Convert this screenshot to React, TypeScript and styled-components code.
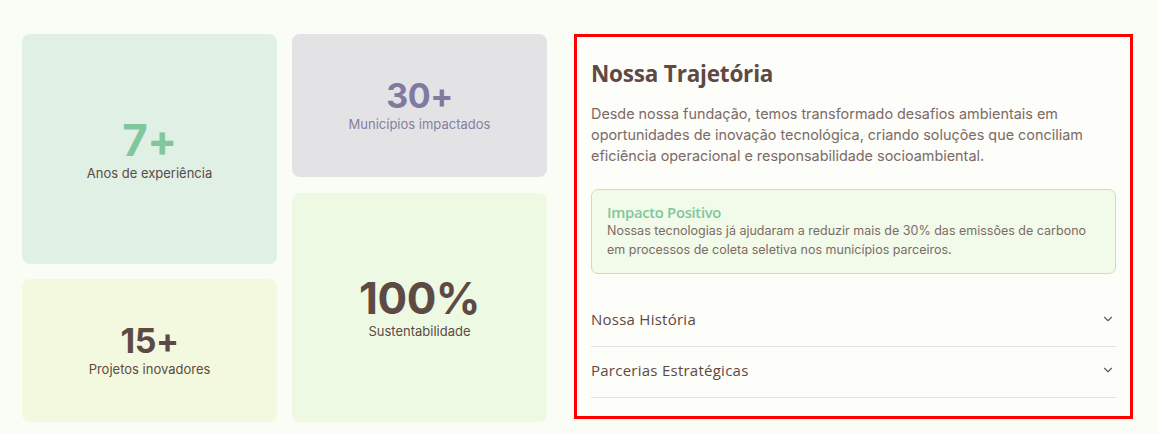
import React from "react";
import styled, { createGlobalStyle } from "styled-components";
import { ChevronDown } from "lucide-react";

const Global = createGlobalStyle`
  html, body { margin: 0; padding: 0; background: #fafcf6; }
  body { font-family: Inter, "Liberation Sans", sans-serif; }
  * { box-sizing: border-box; }
`;

const Page = styled.div`
  display: flex;
  align-items: flex-start;
  gap: 27px;
  padding: 34px 25px 0 22px;
  width: 1158px;
  height: 434px;
`;

const StatsGrid = styled.div`
  display: flex;
  gap: 15px;
  width: 525px;
`;

const StatsColumn = styled.div<{ $gap: number }>`
  display: flex;
  flex-direction: column;
  gap: ${(p) => p.$gap}px;
  width: 255px;
`;

const StatCard = styled.div<{ $h: number; $bg: string }>`
  height: ${(p) => p.$h}px;
  background: ${(p) => p.$bg};
  border-radius: 8px;
  display: flex;
  flex-direction: column;
  align-items: center;
  justify-content: center;
`;

const StatValue = styled.div<{ $size: number; $lh: number; $color: string }>`
  font-family: Inter, sans-serif;
  font-weight: 700;
  font-size: ${(p) => p.$size}px;
  line-height: ${(p) => p.$lh}px;
  color: ${(p) => p.$color};
  letter-spacing: -0.5px;
`;

const StatLabel = styled.div<{ $color: string; $lh: number }>`
  font-family: Inter, sans-serif;
  font-size: 13px;
  line-height: ${(p) => p.$lh}px;
  color: ${(p) => p.$color};
`;

const Panel = styled.section`
  width: 559px;
  height: 385px;
  border: 3px solid #ff0000;
  background: #fdfdf9;
  padding: 21px 14px 0 14px;
  display: flex;
  flex-direction: column;
`;

const Title = styled.h2`
  margin: 0 0 13px 0;
  font-family: "Open Sans", sans-serif;
  font-weight: 700;
  font-size: 22.5px;
  line-height: 32px;
  color: #5d4a44;
  letter-spacing: -0.2px;
`;

const Intro = styled.p`
  margin: 0 0 23px 0;
  font-family: Inter, sans-serif;
  font-size: 14.4px;
  line-height: 21px;
  color: #7b6b66;
`;

const Highlight = styled.div`
  border: 1px solid #bdea9f;
  background: #f2fbea;
  border-radius: 7px;
  padding: 12px 15px 14px 15px;
  margin-bottom: 22px;
`;

const HighlightTitle = styled.div`
  font-family: "Open Sans", sans-serif;
  font-weight: 600;
  font-size: 14.8px;
  line-height: 20px;
  color: #7fc79b;
  letter-spacing: -0.3px;
`;

const HighlightText = styled.div`
  font-family: Inter, sans-serif;
  font-size: 12.5px;
  line-height: 18.5px;
  color: #7b6b66;
`;

const AccordionItem = styled.div`
  display: flex;
  align-items: center;
  justify-content: space-between;
  height: 51px;
  padding-bottom: 4px;
  border-bottom: 1px solid #e2e2df;
`;

const AccordionLabel = styled.span`
  font-family: "Open Sans", sans-serif;
  font-size: 15px;
  letter-spacing: 0.25px;
  color: #5d4a44;
`;

const Chevron = styled(ChevronDown)`
  color: #6b5a54;
  margin-right: 1px;
`;

export default function App() {
  return (
    <>
      <Global />
      <Page>
        <StatsGrid>
          <StatsColumn $gap={15}>
            <StatCard $h={230} $bg="#e0f0e4">
              <StatValue $size={44} $lh={47} $color="#82c79c">7+</StatValue>
              <StatLabel $lh={18} $color="#5d4a44">Anos de experiência</StatLabel>
            </StatCard>
            <StatCard $h={143} $bg="#f3f9df">
              <StatValue $size={34} $lh={36} $color="#5d4a44">15+</StatValue>
              <StatLabel $lh={20} $color="#5d4a44">Projetos inovadores</StatLabel>
            </StatCard>
          </StatsColumn>
          <StatsColumn $gap={16}>
            <StatCard $h={143} $bg="#e3e3e6">
              <StatValue $size={34} $lh={36} $color="#7f7a9e">30+</StatValue>
              <StatLabel $lh={20} $color="#857f9f">Municípios impactados</StatLabel>
            </StatCard>
            <StatCard $h={229} $bg="#edf9e2">
              <StatValue $size={44} $lh={47} $color="#5d4a44">100%</StatValue>
              <StatLabel $lh={18} $color="#5d4a44">Sustentabilidade</StatLabel>
            </StatCard>
          </StatsColumn>
        </StatsGrid>
        <Panel>
          <Title>Nossa Trajetória</Title>
          <Intro>
            Desde nossa fundação, temos transformado desafios ambientais em
            oportunidades de inovação tecnológica, criando soluções que conciliam
            eficiência operacional e responsabilidade socioambiental.
          </Intro>
          <Highlight>
            <HighlightTitle>Impacto Positivo</HighlightTitle>
            <HighlightText>
              Nossas tecnologias já ajudaram a reduzir mais de 30% das emissões de carbono
              em processos de coleta seletiva nos municípios parceiros.
            </HighlightText>
          </Highlight>
          <AccordionItem>
            <AccordionLabel>Nossa História</AccordionLabel>
            <Chevron size={14} strokeWidth={2} />
          </AccordionItem>
          <AccordionItem>
            <AccordionLabel>Parcerias Estratégicas</AccordionLabel>
            <Chevron size={14} strokeWidth={2} />
          </AccordionItem>
        </Panel>
      </Page>
    </>
  );
}
